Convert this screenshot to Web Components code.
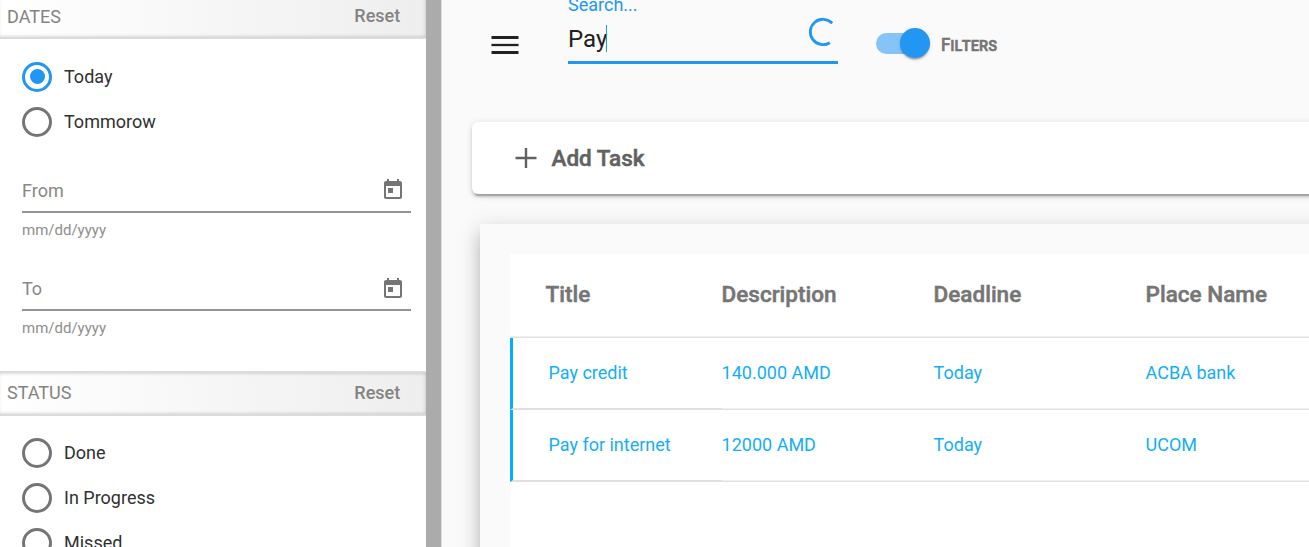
<!DOCTYPE html>
<html lang="en">
<head>
<meta charset="utf-8">
<title>Tasks</title>
<style>
html,body{margin:0;height:100%;overflow:hidden}
body{font-family:Roboto,"Liberation Sans",sans-serif;background:#fafafa;color:rgba(0,0,0,.87)}
</style>
</head>
<body>
<task-app></task-app>
<script>
const define = (name, html) => customElements.define(name, class extends HTMLElement {
  constructor() {
    super();
    this.attachShadow({mode: 'open'}).innerHTML = typeof html === 'function' ? html(this) : html;
  }
});

define('filter-header', `
<style>
:host{display:flex;box-sizing:border-box;height:45px;padding:0 25.800px 2px 7px;align-items:center;justify-content:space-between;
 font-size:18px;line-height:24px;color:#838383;border-top:2px solid #dcdcdc;border-bottom:2px solid #dbdbdb;
 background:linear-gradient(90deg,#fff,#eee);box-shadow:inset -2px 0 4px -1px rgba(0,0,0,.1),inset 0 2px 3px -1px rgba(0,0,0,.1),inset 0 -2px 3px -1px rgba(0,0,0,.1)}
b{font-weight:500}
:host([first]) span{padding-top:2px}
</style>
<span><slot></slot></span><b>Reset</b>`);

define('radio-option', `
<style>
:host{display:flex;align-items:center;height:45px;gap:12px;font-size:18px;line-height:24px;color:#303030}
i{box-sizing:border-box;width:30px;height:30px;border-radius:50%;border:3px solid #757575;display:grid;place-items:center;flex:none}
i::after{content:"";width:15px;height:15px;border-radius:50%}
:host([checked]) i{border-color:#2196f3}
:host([checked]) i::after{background:#2196f3}
</style>
<i></i><span><slot></slot></span>`);

define('date-field', el => `
<style>
:host{display:block;height:98px}
.line{display:flex;box-sizing:border-box;height:46px;align-items:center;justify-content:space-between;border-bottom:2px solid #949494;padding:4px 6px 0 0;
 font-size:18px;line-height:24px;color:#888}
.hint{font-size:15px;line-height:18px;padding-top:8px;color:#8e8e8e}
svg{display:block;width:24px;height:24px;fill:#757575;margin-bottom:2px}
:host([label="To"]) svg{margin-bottom:0}
</style>
<div class="line"><span>${el.getAttribute('label')}</span>
<svg viewBox="0 0 24 24"><path d="M19 3h-1V1h-2v2H8V1H6v2H5c-1.100 0-2 .9-2 2v14c0 1.100.9 2 2 2h14c1.100 0 2-.9 2-2V5c0-1.100-.9-2-2-2zm0 16H5V8h14v11zM7 10h5v5H7z"/></svg></div>
<div class="hint">mm/dd/yyyy</div>`);

define('filter-panel', `
<style>
:host{display:block;box-sizing:border-box;width:442px;height:547px;flex:none;overflow:hidden;background:#fff;border-right:1px solid #e0e0e0}
.row{display:flex}
.content{width:426px;margin-top:-6px}
.bar{width:15px;height:547px;background:#ababab}
.group{padding:15px 15px 0 22px}
.status{padding-top:14px}
.dates{box-sizing:border-box;height:332px}
date-field:first-of-type{margin-top:23px}
</style>
<div class="row"><div class="content">
<filter-header first>DATES</filter-header>
<div class="group dates"><radio-option checked>Today</radio-option><radio-option>Tommorow</radio-option>
<date-field label="From"></date-field><date-field label="To"></date-field></div>
<filter-header>STATUS</filter-header>
<div class="group status"><radio-option>Done</radio-option><radio-option>In Progress</radio-option><radio-option>Missed</radio-option></div>
</div><div class="bar"></div></div>`);

define('search-field', `
<style>
:host{display:block;box-sizing:border-box;width:270px;height:64px;border-bottom:3px solid #2196f3}
.label{font-size:18px;line-height:20px;color:#2196f3;margin-top:-5px;height:20px}
.row{display:flex;justify-content:space-between;height:46px;align-items:flex-start}
.value{display:flex;font-size:24px;line-height:28px;margin-top:10px;color:#212121}
.value i{width:1px;height:27px;background:#2196f3;margin-left:-1px}
svg{display:block;width:30px;height:30px;margin:2px 1px 0 0}
</style>
<div class="label">Search...</div>
<div class="row"><div class="value"><span>Pay</span><i></i></div>
<svg viewBox="0 0 30 30" fill="none" stroke="#2196f3" stroke-width="2.800"><path d="M25.200 6.200A12.700 12.700 0 1 0 22.800 25.700"/></svg></div>`);

define('slide-toggle', `
<style>
:host{display:flex;align-items:center;gap:11px;font-size:19px;font-weight:500;color:#757575}
.track{width:54px;height:21px;border-radius:11px;background:#86c4f8;display:flex;align-items:center;justify-content:flex-end}
.thumb{width:30px;height:30px;border-radius:50%;background:#2196f3;flex:none;box-shadow:0 3px 1.5px -1.5px rgba(0,0,0,.2),0 1.5px 1.5px rgba(0,0,0,.14),0 1.5px 4.5px rgba(0,0,0,.12)}
.text{font-variant:small-caps;-webkit-text-stroke:.5px #757575;line-height:24px;padding-top:3px;transform:scaleX(.89);transform-origin:left}
</style>
<div class="track"><div class="thumb"></div></div><span class="text"><slot></slot></span>`);

define('top-bar', `
<style>
:host{display:flex;height:122px;align-items:flex-start;padding-left:49px}
.menu{display:block;width:28px;height:20px;margin:35px 49px 0 0}
slide-toggle{height:27px;margin:29.500px 0 0 38px}
</style>
<svg class="menu" viewBox="0 0 28 20" fill="#212121"><path d="M.5 1h27v3H.5zM.5 9h27v2H.5zM.5 16h27v3H.5z"/><path d="M.5 8.500h27v3H.5z" opacity=".3"/></svg>
<search-field></search-field><slide-toggle>Filters</slide-toggle>`);

define('add-task', `
<style>
:host{display:flex;box-sizing:border-box;align-items:center;height:72px;margin:0 -30px 0 30px;padding-left:43px;border-radius:6px;background:#fff;
 box-shadow:0 4.5px 1.5px -3px rgba(0,0,0,.2),0 3px 3px rgba(0,0,0,.14),0 1.5px 7.5px rgba(0,0,0,.12);
 font-size:22.500px;font-weight:500;line-height:30px;color:#616161}
svg{width:22px;height:22px;margin-right:14.500px}
span{-webkit-text-stroke:.5px #616161}
</style>
<svg viewBox="0 0 22 22" fill="#616161"><path d="M9.800 1h2.400v8.800H21.500v2.400H12.200V21H9.800v-8.800H.5V9.800H9.800z"/></svg><span>Add Task</span>`);

define('table-row', el => `
<style>
:host{display:grid;grid-template-columns:211.600px 212px 212px 1fr;height:72px;font-size:18px;line-height:24px;color:#14aef8}
:host([head]){height:84px;font-size:22.500px;font-weight:500;color:#757575}
div{box-sizing:border-box;display:flex;align-items:center;box-shadow:inset 0 -1px #e0e0e0,inset 0 -2px #f0f0f0;padding-bottom:2px}
:host([head]) div{-webkit-text-stroke:.5px #757575;padding-bottom:4px}
div:first-of-type{padding-left:35.500px}
:host(:not([head])) div:first-of-type{border-left:3px solid #00b0ff;border-bottom:2px solid #e0e0e0;box-shadow:none;padding-bottom:0}
</style>${el.getAttribute('cells').split('|').map(t => `<div><span>${t}</span></div>`).join('')}`);

define('task-table', `
<style>
:host{display:block;box-sizing:border-box;height:400px;margin:30px -30px 0 38px;padding:30px 0 0 30px;background:#fafafa;
 box-shadow:0 7.500px 7.500px -4.500px rgba(0,0,0,.2),0 12px 15px 1.500px rgba(0,0,0,.14),0 4.500px 21px 3px rgba(0,0,0,.12)}
.sheet{background:#fff;height:370px}
</style>
<div class="sheet">
<table-row head cells="Title|Description|Deadline|Place Name"></table-row>
<table-row cells="Pay credit|140.000 AMD|Today|ACBA bank"></table-row>
<table-row cells="Pay for internet|12000 AMD|Today|UCOM"></table-row>
</div>`);

define('task-app', `
<style>
:host{display:flex;width:1309px;height:547px;overflow:hidden}
main{flex:1;min-width:0;overflow:hidden;height:547px}
</style>
<filter-panel></filter-panel>
<main><top-bar></top-bar><add-task></add-task><task-table></task-table></main>`);
</script>
</body>
</html>
